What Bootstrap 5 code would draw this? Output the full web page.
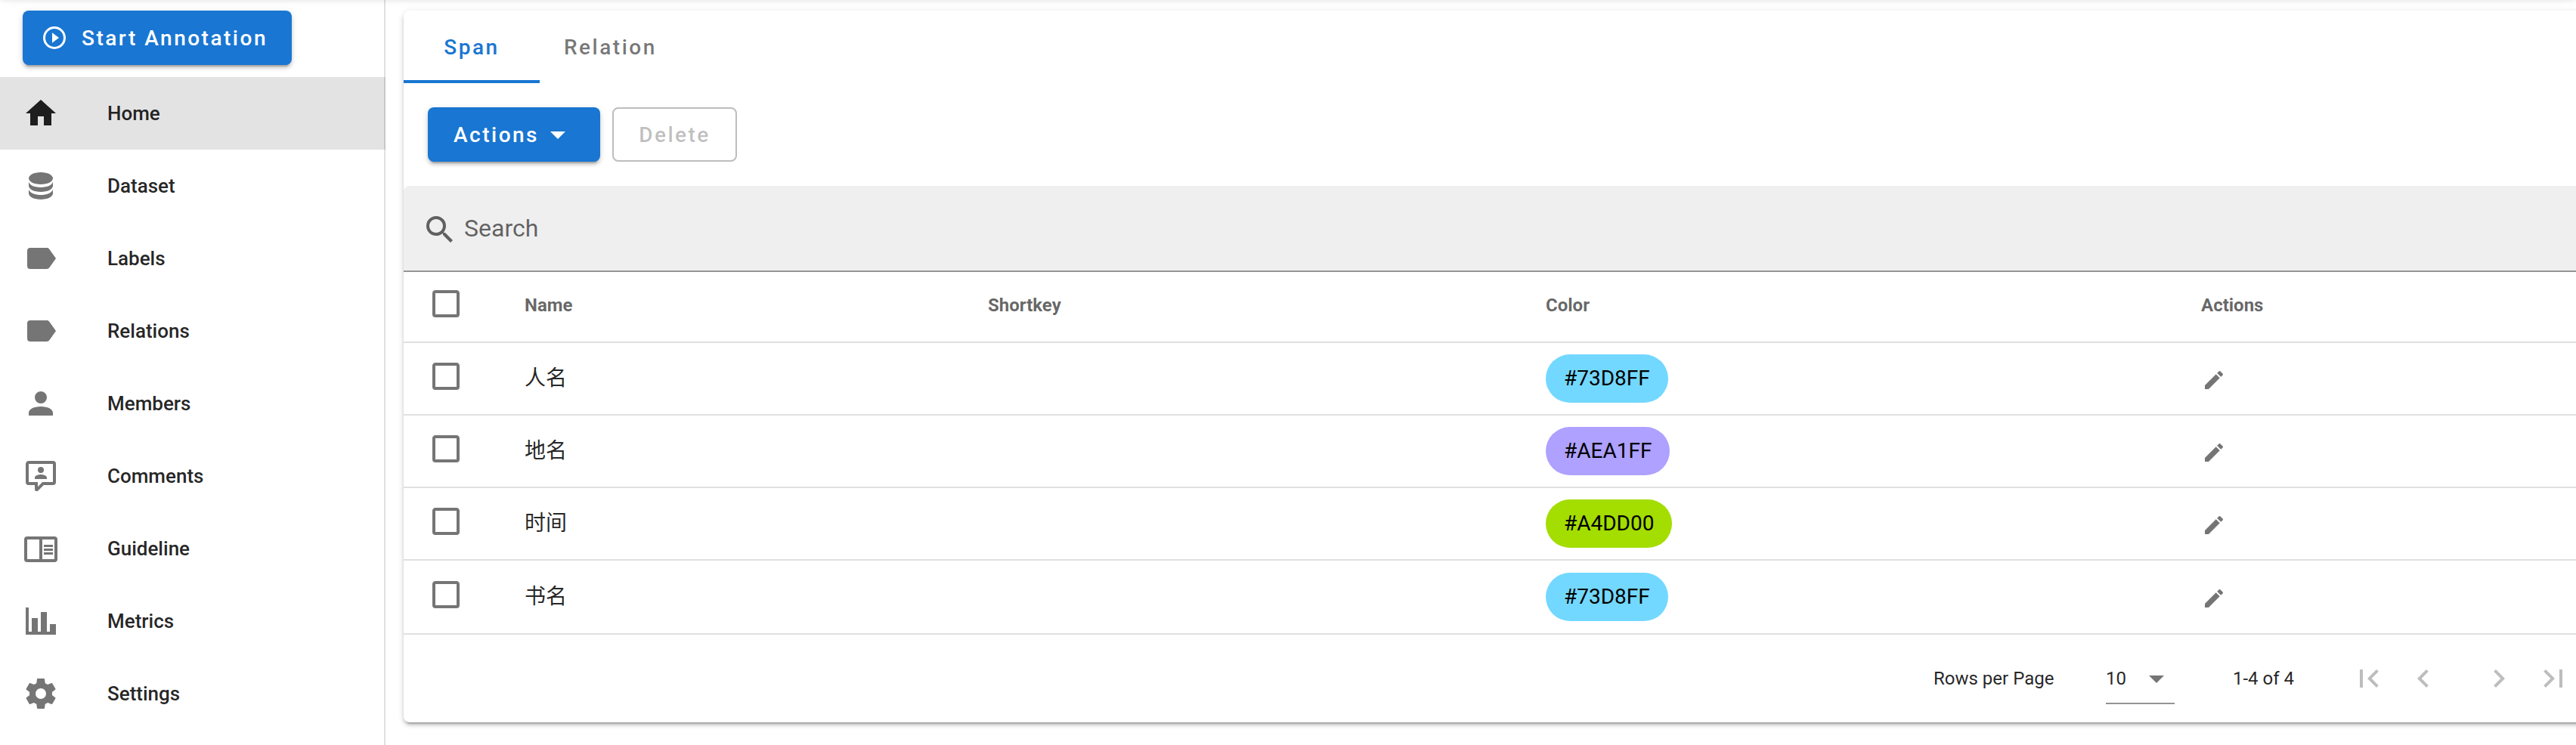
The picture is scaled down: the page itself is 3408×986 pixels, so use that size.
<!DOCTYPE html>
<html lang="en">
<head>
<meta charset="utf-8">
<title>Labels</title>
<meta name="viewport" content="width=device-width, initial-scale=1">
<link href="https://cdn.jsdelivr.net/npm/bootstrap@5.3.0/dist/css/bootstrap.min.css" rel="stylesheet">
<style>
  :root { --brand: #1976d2; --ink: rgba(0,0,0,.87); --muted: rgba(0,0,0,.6); --icon: rgba(0,0,0,.54); --off: rgba(0,0,0,.26); }
  body { font-family: Roboto, "Noto Sans CJK SC", sans-serif; color: var(--ink); height: 986px; background: #fff; line-height: 1.5; }
  svg { fill: currentColor; flex: none; display: block; }
  .i48 { width: 48px; height: 48px; }
  .i36 { width: 36px; height: 36px; }
  .i32 { width: 32px; height: 32px; }
  .topbar { height: 20px; top: -30px; z-index: 5; box-shadow: 0 4px 8px -2px rgba(0,0,0,.2), 0 8px 10px rgba(0,0,0,.14), 0 2px 20px rgba(0,0,0,.12); }
  .sidebar { width: 510px; border-right: 2px solid #e0e0e0; padding-top: 14px; }
  .sidebar .list-group-item { height: 96px; padding: 0 0 0 30px; gap: 64px; font-size: 26px; font-weight: 500; color: var(--ink); background: none; border: 0; width: 510px; }
  .sidebar .list-group-item svg { color: var(--icon); }
  .sidebar .list-group-item.current { background: rgba(0,0,0,.11); }
  .sidebar .list-group-item.current svg { color: var(--ink); }
  .btn-ui { height: 72px; border-radius: 8px; font-size: 28px; font-weight: 500; letter-spacing: 2.5px; line-height: 1; }
  .btn-ui span { padding-top: 2px; }
  .btn-fill, .btn-fill:hover { background: var(--brand); color: #fff; border: 0; box-shadow: 0 6px 2px -4px rgba(0,0,0,.2), 0 4px 4px rgba(0,0,0,.14), 0 2px 10px rgba(0,0,0,.12); }
  .btn-actions { width: 228px; padding: 0 32px 0 34px; }
  .btn-actions svg { margin-left: auto; }
  .btn-ui.btn-line:disabled { border: 2px solid #bdbdbd; color: var(--off); opacity: 1; width: 165px; padding: 0; background: none; }
  .btn-start { margin: 0 0 16px 30px; width: 356px; padding: 0 0 0 24px; gap: 18px; }
  .main-area { padding: 14px 0 0 24px; }
  .panel { width: 2900px; height: 942px; border-radius: 8px; background: #fff; box-shadow: 0 6px 2px -4px rgba(0,0,0,.2), 0 4px 4px rgba(0,0,0,.14), 0 2px 10px rgba(0,0,0,.12); }
  .tabs-row .nav-link { height: 96px; font-size: 28px; font-weight: 500; letter-spacing: 2.5px; padding: 5px 32px 0; min-width: 180px; color: var(--icon); border-radius: 0; border-bottom: 4px solid transparent; }
  .tabs-row .nav-link.active { color: var(--brand); border-bottom-color: var(--brand); }
  .toolbar { padding: 32px; gap: 16px; height: 136px; }
  .search { height: 114px; background: #efefef; border-radius: 8px 8px 0 0; border-bottom: 2px solid #949494; padding: 4px 24px 0; font-size: 32px; color: var(--muted); gap: 8px; }
  .search span { margin-top: -5px; }
  .grid-table { table-layout: fixed; width: 2900px; margin: 0; border-collapse: separate; border-spacing: 0; --bs-table-bg: transparent; color: var(--ink); }
  .grid-table th, .grid-table td { height: 96px; padding: 0 32px; border-bottom: 2px solid #e0e0e0; vertical-align: middle; color: inherit; }
  .grid-table th { height: 94px; padding-bottom: 4px; font-size: 24px; font-weight: 700; color: var(--muted); }
  .grid-table td { font-size: 28px; line-height: 42px; }
  .grid-table tbody tr:last-child td { height: 98px; }
  .grid-table svg { color: var(--icon); }
  .box { margin-top: -6px; }
  thead .box { margin-top: -4px; }
  .pill { height: 64px; width: fit-content; border-radius: 32px; padding: 0 24px; color: #000; }
  .pen { margin: 4px 0 0 1px; }
  .pager { height: 116px; font-size: 24px; padding-left: 2024px; }
  .rows-label { width: 228px; }
  .rows-select { width: 91px; height: 70px; margin: 0 77px 24px 0; padding-top: 4px; border-bottom: 2px solid #949494; }
  .rows-select svg { color: var(--icon); }
  .range { width: 156px; }
  .pager-nav { color: var(--off); gap: 52px; }
</style>
</head>
<body class="overflow-hidden">
<svg class="d-none" xmlns="http://www.w3.org/2000/svg">
  <symbol id="play" viewBox="0 0 24 24"><path d="M12,20C7.59,20 4,16.41 4,12C4,7.59 7.59,4 12,4C16.41,4 20,7.59 20,12C20,16.41 16.41,20 12,20M12,2A10,10 0 0,0 2,12A10,10 0 0,0 12,22A10,10 0 0,0 22,12A10,10 0 0,0 12,2M10,16.5L16,12L10,7.5V16.5Z"/></symbol>
  <symbol id="home" viewBox="0 0 24 24"><path d="M10,20V14H14V20H19V12H22L12,3L2,12H5V20H10Z"/></symbol>
  <symbol id="database" viewBox="0 0 24 24"><path d="M12,3C7.58,3 4,4.79 4,7C4,9.21 7.58,11 12,11C16.42,11 20,9.21 20,7C20,4.79 16.42,3 12,3M4,9V12C4,14.21 7.58,16 12,16C16.42,16 20,14.21 20,12V9C20,11.21 16.42,13 12,13C7.58,13 4,11.21 4,9M4,14V17C4,19.21 7.58,21 12,21C16.42,21 20,19.21 20,17V14C20,16.21 16.42,18 12,18C7.58,18 4,16.21 4,14Z"/></symbol>
  <symbol id="tag" viewBox="0 0 24 24"><path d="M17.63,5.84C17.27,5.33 16.67,5 16,5H5A2,2 0 0,0 3,7V17A2,2 0 0,0 5,19H16C16.67,19 17.27,18.66 17.63,18.15L22,12L17.63,5.84Z"/></symbol>
  <symbol id="account" viewBox="0 0 24 24"><path d="M12,4A4,4 0 0,1 16,8A4,4 0 0,1 12,12A4,4 0 0,1 8,8A4,4 0 0,1 12,4M12,14C16.42,14 20,15.79 20,18V20H4V18C4,15.79 7.58,14 12,14Z"/></symbol>
  <symbol id="comment" viewBox="0 0 24 24"><path d="M9,22A1,1 0 0,1 8,21V18H4A2,2 0 0,1 2,16V4C2,2.89 2.9,2 4,2H20A2,2 0 0,1 22,4V16A2,2 0 0,1 20,18H13.9L10.2,21.71C10,21.9 9.75,22 9.5,22V22H9M10,16V19.08L13.08,16H20V4H4V16H10M16,14H8V13C8,11.67 10.67,11 12,11C13.33,11 16,11.67 16,13V14M12,6A2,2 0 0,1 14,8A2,2 0 0,1 12,10A2,2 0 0,1 10,8A2,2 0 0,1 12,6Z"/></symbol>
  <symbol id="book" viewBox="0 0 24 24"><path d="M21,4H3A2,2 0 0,0 1,6V19A2,2 0 0,0 3,21H21A2,2 0 0,0 23,19V6A2,2 0 0,0 21,4M3,19V6H11V19H3M21,19H13V6H21V19M14,9.5H20V11H14V9.5M14,12H20V13.5H14V12M14,14.5H20V16H14V14.5Z"/></symbol>
  <symbol id="chart" viewBox="0 0 24 24"><path d="M22,21H2V3H4V19H6V10H10V19H12V6H16V19H18V14H22V21Z"/></symbol>
  <symbol id="cog" viewBox="0 0 24 24"><path d="M12,15.5A3.5,3.5 0 0,1 8.5,12A3.5,3.5 0 0,1 12,8.5A3.5,3.5 0 0,1 15.5,12A3.5,3.5 0 0,1 12,15.5M19.43,12.97C19.47,12.65 19.5,12.33 19.5,12C19.5,11.67 19.47,11.34 19.43,11L21.54,9.37C21.73,9.22 21.78,8.95 21.66,8.73L19.66,5.27C19.54,5.05 19.27,4.96 19.05,5.05L16.56,6.05C16.04,5.66 15.5,5.32 14.87,5.07L14.5,2.42C14.46,2.18 14.25,2 14,2H10C9.75,2 9.54,2.18 9.5,2.42L9.13,5.07C8.5,5.32 7.96,5.66 7.44,6.05L4.95,5.05C4.73,4.96 4.46,5.05 4.34,5.27L2.34,8.73C2.21,8.95 2.27,9.22 2.46,9.37L4.57,11C4.53,11.34 4.5,11.67 4.5,12C4.5,12.33 4.53,12.65 4.57,12.97L2.46,14.63C2.27,14.78 2.21,15.05 2.34,15.27L4.34,18.73C4.46,18.95 4.73,19.03 4.95,18.95L7.44,17.94C7.96,18.34 8.5,18.68 9.13,18.93L9.5,21.58C9.54,21.82 9.75,22 10,22H14C14.25,22 14.46,21.82 14.5,21.58L14.87,18.93C15.5,18.67 16.04,18.34 16.56,17.94L19.05,18.95C19.27,19.03 19.54,18.95 19.66,18.73L21.66,15.27C21.78,15.05 21.73,14.78 21.54,14.63L19.43,12.97Z"/></symbol>
  <symbol id="caret" viewBox="0 0 24 24"><path d="M7,10L12,15L17,10H7Z"/></symbol>
  <symbol id="magnify" viewBox="0 0 24 24"><path d="M9.5,3A6.5,6.5 0 0,1 16,9.5C16,11.11 15.41,12.59 14.44,13.73L14.71,14H15.5L20.5,19L19,20.5L14,15.5V14.71L13.73,14.44C12.59,15.41 11.11,16 9.5,16A6.5,6.5 0 0,1 3,9.5A6.5,6.5 0 0,1 9.5,3M9.5,5C7,5 5,7 5,9.5C5,12 7,14 9.5,14C12,14 14,12 14,9.5C14,7 12,5 9.5,5Z"/></symbol>
  <symbol id="box" viewBox="0 0 24 24"><path d="M19,3H5C3.89,3 3,3.89 3,5V19A2,2 0 0,0 5,21H19A2,2 0 0,0 21,19V5C21,3.89 20.1,3 19,3M19,5V19H5V5H19Z"/></symbol>
  <symbol id="pencil" viewBox="0 0 24 24"><path d="M20.71,7.04C21.1,6.65 21.1,6 20.71,5.63L18.37,3.29C18,2.9 17.35,2.9 16.96,3.29L15.12,5.12L18.87,8.87M3,17.25V21H6.75L17.81,9.93L14.06,6.18L3,17.25Z"/></symbol>
  <symbol id="first" viewBox="0 0 24 24"><path d="M18.41,16.59L13.82,12L18.41,7.41L17,6L11,12L17,18L18.41,16.59M6,6H8V18H6V6Z"/></symbol>
  <symbol id="prev" viewBox="0 0 24 24"><path d="M15.41,16.58L10.83,12L15.41,7.41L14,6L8,12L14,18L15.41,16.58Z"/></symbol>
  <symbol id="next" viewBox="0 0 24 24"><path d="M8.59,16.58L13.17,12L8.59,7.41L10,6L16,12L10,18L8.59,16.58Z"/></symbol>
  <symbol id="last" viewBox="0 0 24 24"><path d="M5.59,7.41L10.18,12L5.59,16.59L7,18L13,12L7,6L5.59,7.41M16,6H18V18H16V6Z"/></symbol>
</svg>

<header class="topbar bg-white position-fixed start-0 end-0"></header>

<div class="d-flex h-100">
  <nav class="sidebar flex-shrink-0">
    <button class="btn btn-ui btn-fill btn-start d-flex align-items-center"><svg class="i36"><use href="#play"/></svg><span>Start Annotation</span></button>
    <div class="list-group list-group-flush">
      <a href="#" class="list-group-item current d-flex align-items-center"><svg class="i48"><use href="#home"/></svg>Home</a>
      <a href="#" class="list-group-item d-flex align-items-center"><svg class="i48"><use href="#database"/></svg>Dataset</a>
      <a href="#" class="list-group-item d-flex align-items-center"><svg class="i48"><use href="#tag"/></svg>Labels</a>
      <a href="#" class="list-group-item d-flex align-items-center"><svg class="i48"><use href="#tag"/></svg>Relations</a>
      <a href="#" class="list-group-item d-flex align-items-center"><svg class="i48"><use href="#account"/></svg>Members</a>
      <a href="#" class="list-group-item d-flex align-items-center"><svg class="i48"><use href="#comment"/></svg>Comments</a>
      <a href="#" class="list-group-item d-flex align-items-center"><svg class="i48"><use href="#book"/></svg>Guideline</a>
      <a href="#" class="list-group-item d-flex align-items-center"><svg class="i48"><use href="#chart"/></svg>Metrics</a>
      <a href="#" class="list-group-item d-flex align-items-center"><svg class="i48"><use href="#cog"/></svg>Settings</a>
    </div>
  </nav>

  <main class="main-area flex-shrink-0">
    <section class="panel">
      <div class="nav tabs-row">
        <a href="#" class="nav-link active d-flex align-items-center justify-content-center">Span</a>
        <a href="#" class="nav-link d-flex align-items-center justify-content-center">Relation</a>
      </div>
      <div class="toolbar d-flex">
        <button class="btn btn-ui btn-fill btn-actions d-flex align-items-center"><span>Actions</span><svg class="i48"><use href="#caret"/></svg></button>
        <button class="btn btn-ui btn-line d-flex align-items-center justify-content-center" disabled><span>Delete</span></button>
      </div>
      <div class="search d-flex align-items-center"><svg class="i48"><use href="#magnify"/></svg><span>Search</span></div>
      <table class="table grid-table">
        <colgroup><col style="width:128px"><col style="width:613px"><col style="width:738px"><col style="width:867px"><col></colgroup>
        <thead>
          <tr><th><svg class="i48 box"><use href="#box"/></svg></th><th>Name</th><th>Shortkey</th><th>Color</th><th>Actions</th></tr>
        </thead>
        <tbody>
          <tr><td><svg class="i48 box"><use href="#box"/></svg></td><td>人名</td><td></td><td><span class="pill d-flex align-items-center" style="background:#73D8FF">#73D8FF</span></td><td><svg class="i32 pen"><use href="#pencil"/></svg></td></tr>
          <tr><td><svg class="i48 box"><use href="#box"/></svg></td><td>地名</td><td></td><td><span class="pill d-flex align-items-center" style="background:#AEA1FF">#AEA1FF</span></td><td><svg class="i32 pen"><use href="#pencil"/></svg></td></tr>
          <tr><td><svg class="i48 box"><use href="#box"/></svg></td><td>时间</td><td></td><td><span class="pill d-flex align-items-center" style="background:#A4DD00">#A4DD00</span></td><td><svg class="i32 pen"><use href="#pencil"/></svg></td></tr>
          <tr><td><svg class="i48 box"><use href="#box"/></svg></td><td>书名</td><td></td><td><span class="pill d-flex align-items-center" style="background:#73D8FF">#73D8FF</span></td><td><svg class="i32 pen"><use href="#pencil"/></svg></td></tr>
        </tbody>
      </table>
      <div class="pager d-flex align-items-center">
        <span class="rows-label flex-shrink-0">Rows per Page</span>
        <div class="rows-select d-flex align-items-center justify-content-between align-self-end flex-shrink-0"><span>10</span><svg class="i48"><use href="#caret"/></svg></div>
        <span class="range flex-shrink-0">1-4 of 4</span>
        <div class="pager-nav d-flex">
          <div class="d-flex gap-4"><svg class="i48"><use href="#first"/></svg><svg class="i48"><use href="#prev"/></svg></div>
          <div class="d-flex gap-4"><svg class="i48"><use href="#next"/></svg><svg class="i48"><use href="#last"/></svg></div>
        </div>
      </div>
    </section>
  </main>
</div>
<script src="https://cdn.jsdelivr.net/npm/bootstrap@5.3.0/dist/js/bootstrap.bundle.min.js"></script>
</body>
</html>
